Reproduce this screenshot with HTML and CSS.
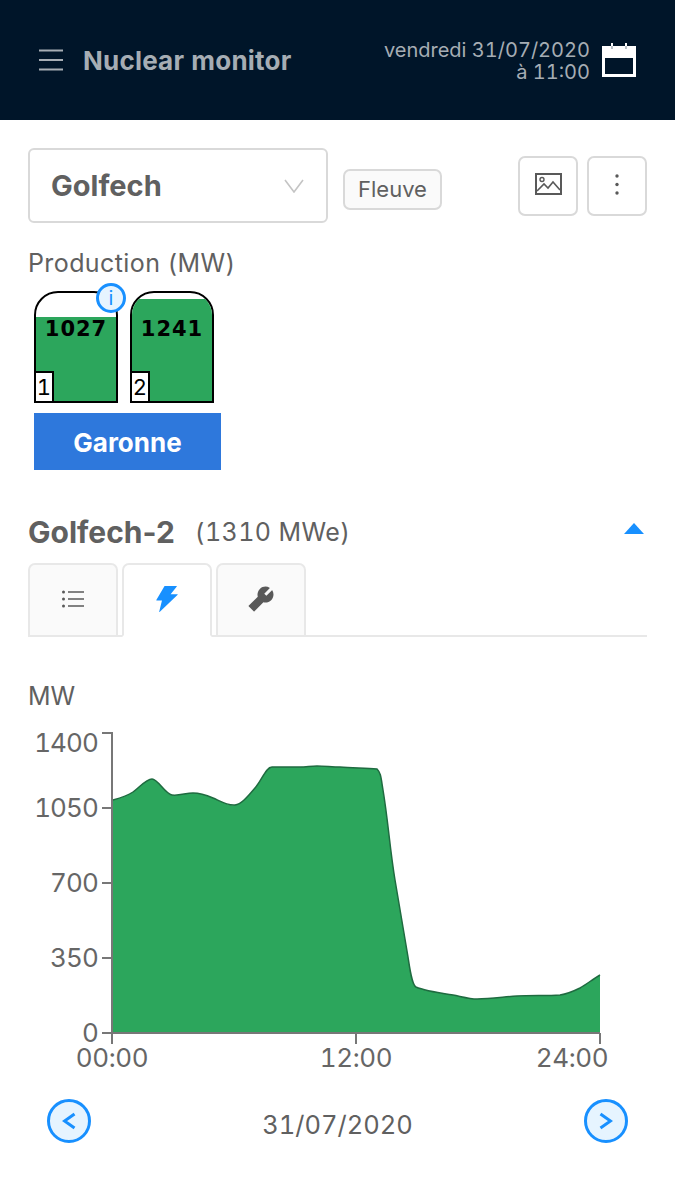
FILE: index.html
```html
<!DOCTYPE html>
<html lang="fr">
<head>
  <meta charset="UTF-8" />
  <meta name="viewport" content="width=device-width, initial-scale=1.0" />
  <title>Nuclear monitor</title>
  <link rel="stylesheet" href="styles.css">
</head>
<body>

  <header class="topbar">
    <svg class="burger" viewBox="0 0 24 22" width="24" height="22">
      <path d="M0 1.5h24M0 11h24M0 20.5h24" stroke="#a6adb4" stroke-width="2.2" fill="none" />
    </svg>
    <div class="app-title">Nuclear monitor</div>
    <div class="when">vendredi 31/07/2020<br>à 11:00</div>
    <svg class="calendar" viewBox="0 0 34 34" width="34" height="34">
      <path fill="#fff" d="M0 3h9V0h2v3h12V0h2v3h9v31H0z" />
      <rect x="3" y="15" width="28" height="16" fill="#001529" />
      <path d="M10 3v3M24 3v3" stroke="#b9c0c6" stroke-width="2" />
    </svg>
  </header>

  <main class="content">

    <div class="toolbar">
      <div class="select">
        <span>Golfech</span>
        <svg viewBox="0 0 20 14" width="20" height="14">
          <path d="M1 1l9 12 9-12" fill="none" stroke="#c4c4c4" stroke-width="1.6" />
        </svg>
      </div>
      <div class="tag">Fleuve</div>
      <div class="tool-buttons">
        <button class="icon-btn">
          <svg viewBox="0 0 27 22" width="27" height="22">
            <rect x="1" y="1" width="25" height="20" fill="none" stroke="#595959" stroke-width="2" />
            <circle cx="7" cy="6.5" r="2" fill="none" stroke="#595959" stroke-width="1.4" />
            <path d="M2 18l7-7 4 4 5-6 7 8" fill="none" stroke="#595959" stroke-width="1.6" />
          </svg>
        </button>
        <button class="icon-btn">
          <svg viewBox="0 0 4 21" width="4" height="21">
            <circle cx="2" cy="2" r="1.7" fill="#595959" />
            <circle cx="2" cy="10.5" r="1.7" fill="#595959" />
            <circle cx="2" cy="19" r="1.7" fill="#595959" />
          </svg>
        </button>
      </div>
    </div>

    <div class="section-label">Production (MW)</div>

    <div class="plant">
      <div class="reactors">
        <div class="reactor">
          <div class="tank">
            <div class="level" style="height: 78%"></div>
          </div>
          <div class="power">1027</div>
          <div class="unit">1</div>
          <div class="info">i</div>
        </div>
        <div class="reactor">
          <div class="tank">
            <div class="level" style="height: 94.7%"></div>
          </div>
          <div class="power">1241</div>
          <div class="unit">2</div>
        </div>
      </div>
      <div class="river">Garonne</div>
    </div>

    <div class="unit-head">
      <h2>Golfech-2</h2>
      <span class="capacity">(1310 MWe)</span>
      <svg class="caret" viewBox="0 0 20 11" width="20" height="11">
        <path d="M10 0l10 11H0z" fill="#1890ff" />
      </svg>
    </div>

    <div class="tabs">
      <div class="tab">
        <svg viewBox="0 0 22 18" width="22" height="18">
          <path d="M6 2h16M6 9h16M6 16h16" stroke="#595959" stroke-width="1.7" />
          <circle cx="1.5" cy="2" r="1.5" fill="#595959" />
          <circle cx="1.5" cy="9" r="1.5" fill="#595959" />
          <circle cx="1.5" cy="16" r="1.5" fill="#595959" />
        </svg>
      </div>
      <div class="tab active">
        <svg viewBox="64 64 896 896" width="28" height="28">
          <path fill="#1890ff" d="M848 359.3H627.7L825.8 109c4.1-5.3.4-13-6.3-13H436c-2.8 0-5.5 1.5-6.9 4L170 547.5c-3.1 5.3.7 12 6.9 12h174.4l-89.4 357.6c-1.9 7.8 7.5 13.3 13.3 7.7L853.5 373c5.2-4.9 1.7-13.7-5.5-13.7z" />
        </svg>
      </div>
      <div class="tab">
        <svg viewBox="64 64 896 896" width="28" height="28">
          <path fill="#595959" d="M876.6 239.5c-.5-.9-1.2-1.8-2-2.5-5-5-13.1-5-18.1 0L684.2 409.3l-67.9-67.9L788.7 169c.8-.8 1.4-1.6 2-2.5 3.6-6.1 1.6-13.9-4.5-17.5-98.2-58-226.8-44.7-311.3 39.7-67 67-89.2 162-66.5 247.4l-293 293c-3 3-2.8 7.9.3 11l169.7 169.7c3.1 3.1 8.1 3.3 11 .3l292.9-292.9c85.5 22.8 180.5.7 247.6-66.4 84.4-84.5 97.7-213.1 39.7-311.3z" />
        </svg>
      </div>
    </div>

    <div class="chart-label">MW</div>

    <!-- viewBox uses page coordinates so the points are easy to read off -->
    <svg class="chart" viewBox="28 720 619 360" width="619" height="360">
      <path fill="#2ca65c" stroke="none" d="M113 800C120 798 127 796 133 792C139 788 146 779 152 779C158 779 165 794 172 795C179 796 186 793 193 793C200 793 206 795 213 798C220 801 228 806 235 805C242 804 248 796 255 788C262 780 266 767 272 767C281 767 291 767 300 767C306 767 311 766 317 766C325 766 332 767 340 767C352 768 365 768 377 769C381 773 381 778 383 790C388 820 390 850 395 880C399 905 404 932 408 957C410 970 412 985 416 987C425 991 440 993 453 995C463 997 470 999 477 999C490 999 503 997 517 996C531 995 546 996 560 995C567 994 574 991 580 988C587 984 593 979 600 975V1033H113Z" />
      <path fill="none" stroke="#1f6b40" stroke-width="1.5" d="M113 800C120 798 127 796 133 792C139 788 146 779 152 779C158 779 165 794 172 795C179 796 186 793 193 793C200 793 206 795 213 798C220 801 228 806 235 805C242 804 248 796 255 788C262 780 266 767 272 767C281 767 291 767 300 767C306 767 311 766 317 766C325 766 332 767 340 767C352 768 365 768 377 769C381 773 381 778 383 790C388 820 390 850 395 880C399 905 404 932 408 957C410 970 412 985 416 987C425 991 440 993 453 995C463 997 470 999 477 999C490 999 503 997 517 996C531 995 546 996 560 995C567 994 574 991 580 988C587 984 593 979 600 975" />
      <path fill="none" stroke="#777" stroke-width="2" d="M102 733H112V1033H600M102 808H112M102 883H112M102 958H112M102 1033H112M112 1033V1044M356 1033V1044M600 1033V1044" />
      <g class="tick-y">
        <text x="98" y="752">1400</text>
        <text x="98" y="817">1050</text>
        <text x="98" y="892">700</text>
        <text x="98" y="967">350</text>
        <text x="98" y="1042">0</text>
      </g>
      <g class="tick-x">
        <text x="112" y="1067">00:00</text>
        <text x="356" y="1067">12:00</text>
        <text x="572" y="1067">24:00</text>
      </g>
    </svg>

    <div class="date-nav">
      <button class="round-btn">
        <svg viewBox="0 0 14 18" width="14" height="18">
          <path d="M12.5 2L2.5 9l10 7" fill="none" stroke="#1890ff" stroke-width="3" />
        </svg>
      </button>
      <div class="date">31/07/2020</div>
      <button class="round-btn">
        <svg viewBox="0 0 14 18" width="14" height="18">
          <path d="M1.5 2l10 7-10 7" fill="none" stroke="#1890ff" stroke-width="3" />
        </svg>
      </button>
    </div>

  </main>

</body>
</html>
```

FILE: styles.css
```css
* {
  box-sizing: border-box;
}

body {
  margin: 0;
  background-color: #fff;
  color: #606060;
  font-family: Inter, "Liberation Sans", sans-serif;
  font-variant-numeric: tabular-nums;
}

.topbar {
  height: 120px;
  background-color: #001529;
  display: flex;
  align-items: center;
  padding: 0 39px;
}

.burger {
  margin-right: 20px;
}

.app-title {
  color: #a6adb4;
  font-size: 26px;
  font-weight: 700;
  letter-spacing: 0.2px;
  flex: 1;
}

.when {
  color: #a6adb4;
  font-size: 20px;
  line-height: 22px;
  text-align: right;
  margin: 1px 12px 0 0;
}

.content {
  padding: 28px 28px 0;
}

.toolbar {
  display: flex;
  align-items: center;
  height: 75px;
}

.select {
  width: 300px;
  height: 75px;
  border: 2px solid #d9d9d9;
  border-radius: 6px;
  display: flex;
  align-items: center;
  justify-content: space-between;
  padding: 0 22px 0 21px;
  font-size: 29px;
  font-weight: 700;
}

.tag {
  margin-left: 15px;
  margin-top: 8px;
  width: 99px;
  height: 41px;
  padding-bottom: 2px;
  border: 2px solid #d9d9d9;
  border-radius: 7px;
  background-color: #fafafa;
  font-size: 22px;
  display: flex;
  align-items: center;
  justify-content: center;
}

.tool-buttons {
  margin-left: auto;
  display: flex;
  gap: 9px;
}

.icon-btn {
  width: 60px;
  height: 60px;
  padding: 0 0 3px;
  border: 2px solid #d9d9d9;
  border-radius: 7px;
  background-color: #fff;
  display: flex;
  align-items: center;
  justify-content: center;
}

.section-label {
  margin-top: 25px;
  font-size: 25px;
  letter-spacing: 0.4px;
  line-height: 30px;
}

.plant {
  margin: 13px 0 0 6px;
  width: 187px;
}

.reactors {
  display: flex;
  gap: 12px;
}

.reactor {
  position: relative;
  width: 84px;
  height: 112px;
  border: 2px solid #000;
  border-radius: 24px 24px 0 0;
}

.tank {
  position: absolute;
  top: 0;
  left: 0;
  right: 0;
  bottom: 0;
  overflow: hidden;
  border-radius: 22px 22px 0 0;
}

.level {
  position: absolute;
  left: 0;
  right: 0;
  bottom: 0;
  background-color: #2ca65c;
}

.power {
  position: absolute;
  top: 23px;
  left: 0;
  right: 0;
  text-align: center;
  color: #000;
  font-family: "DejaVu Sans", sans-serif;
  font-size: 21px;
  font-weight: 700;
  line-height: 26px;
  letter-spacing: 1px;
}

.unit {
  position: absolute;
  left: 0;
  bottom: 0;
  width: 18px;
  height: 30px;
  background-color: #fff;
  border: solid #000;
  border-width: 2px 2px 0 0;
  color: #000;
  font-size: 22px;
  line-height: 28px;
  text-align: center;
}

.info {
  position: absolute;
  top: -10px;
  right: -10px;
  width: 30px;
  height: 30px;
  border: 3px solid #1890ff;
  border-radius: 50%;
  background-color: #e6f4ff;
  color: #1890ff;
  font-size: 20px;
  line-height: 24px;
  text-align: center;
}

.river {
  margin-top: 10px;
  height: 57px;
  background-color: #2e78dc;
  color: #fff;
  font-size: 26px;
  font-weight: 700;
  line-height: 59px;
  text-align: center;
}

.unit-head {
  margin-top: 43px;
  display: flex;
  align-items: center;
  height: 38px;
}

.unit-head h2 {
  margin: 0;
  font-size: 30px;
  font-weight: 700;
  font-variant-numeric: normal;
}

.capacity {
  margin-left: 20px;
  font-size: 25px;
  letter-spacing: 0.4px;
}

.caret {
  margin-left: auto;
  margin-top: -8px;
  margin-right: 3px;
}

.tabs {
  margin-top: 12px;
  height: 74px;
  display: flex;
  gap: 4px;
  border-bottom: 2px solid #e8e8e8;
}

.tab {
  width: 90px;
  height: 74px;
  border: 2px solid #e8e8e8;
  border-radius: 7px 7px 0 0;
  background-color: #fafafa;
  display: flex;
  align-items: center;
  justify-content: center;
  padding-bottom: 2px;
}

.tab.active {
  background-color: #fff;
  border-bottom-color: #fff;
}

.chart-label {
  margin-top: 44px;
  font-size: 25px;
  line-height: 30px;
}

.chart {
  display: block;
  margin-top: 9px;
}

.chart text {
  fill: #666;
  font-size: 26px;
}

.tick-y text {
  text-anchor: end;
  letter-spacing: -0.9px;
}

.tick-x text {
  text-anchor: middle;
  letter-spacing: -0.4px;
}

.date-nav {
  margin-top: 19px;
  padding: 0 19px;
  display: flex;
  align-items: center;
  justify-content: space-between;
}

.round-btn {
  width: 44px;
  height: 44px;
  padding: 0;
  border: 3px solid #1890ff;
  border-radius: 50%;
  background-color: #e6f4ff;
  display: flex;
  align-items: center;
  justify-content: center;
}

.date {
  font-size: 25.5px;
  padding-top: 6px;
}
```
